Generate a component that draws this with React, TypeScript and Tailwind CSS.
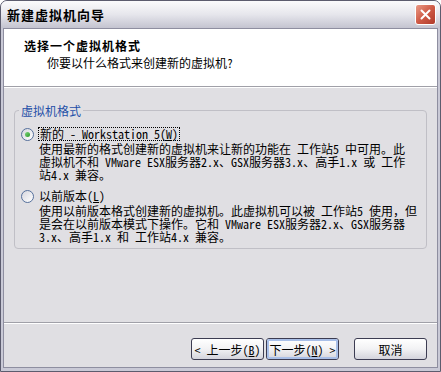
// latin runs in SimSun are half-width (6px at 12px), so render them in a mono CJK face
const mono = "whitespace-pre font-['Noto_Sans_Mono_CJK_SC','Liberation_Mono',monospace] leading-[0px]";

function T({ s }: { s: string }) {
  const parts = s.match(/[\x20-\x7e]+|[^\x20-\x7e]+/g) ?? [];
  return (
    <>
      {parts.map((p, i) =>
        /^[\x20-\x7e]+$/.test(p) ? (
          <span key={i} className={mono}>
            {p}
          </span>
        ) : (
          p
        )
      )}
    </>
  );
}

function Line({ s }: { s: string }) {
  return (
    <div className="h-[13px] whitespace-nowrap leading-[13px]">
      <T s={s} />
    </div>
  );
}

function Radio({ checked }: { checked?: boolean }) {
  return (
    <span className="flex h-[13px] w-[13px] shrink-0 items-center justify-center rounded-full border border-[#55709c] bg-gradient-to-br from-[#d6d6de] to-white">
      {checked && <span className="h-[5px] w-[5px] rounded-full bg-gradient-to-br from-[#7fd47f] to-[#1f9a1f]" />}
    </span>
  );
}

function Button({ children, primary }: { children: React.ReactNode; primary?: boolean }) {
  return (
    <div className="flex h-[22px] w-[73px] items-center justify-center rounded-[3px] border border-[#3c3c52] bg-gradient-to-b from-white via-[#f2f2f4] to-[#d4d4dc] text-[12px] text-black">
      <div
        className={
          primary
            ? "flex h-full w-full items-center justify-center rounded-[2px] border-2 border-[#a9bfe8]"
            : "flex h-full w-full items-center justify-center"
        }
      >
        <div className="h-[13px] whitespace-nowrap leading-[13px]">{children}</div>
      </div>
    </div>
  );
}

export default function App() {
  return (
    <div className="h-[372px] w-[441px] overflow-hidden rounded-t-[7px] border border-[#5c5c6e] bg-[#c9c9d6] font-['Noto_Sans_CJK_SC',sans-serif] text-black">
      {/* title bar */}
      <div className="flex h-[27px] items-center justify-between bg-gradient-to-b from-[#fbfbfc] via-[#e6e6ec] to-[#c4c4d0] pl-[6px] pr-[4px]">
        <span className="text-[13px] font-bold leading-[13px] tracking-[1px]">新建虚拟机向导</span>
        <div className="flex h-[21px] w-[21px] items-center justify-center rounded-[3px] border border-white bg-gradient-to-br from-[#e99a86] via-[#cf5a46] to-[#b03a2a]">
          <svg width="11" height="11" viewBox="0 0 11 11">
            <path d="M1.5 1.5 L9.5 9.5 M9.5 1.5 L1.5 9.5" stroke="white" strokeWidth="2" strokeLinecap="round" />
          </svg>
        </div>
      </div>

      {/* content */}
      <div className="mx-[2px] flex h-[340px] flex-col border border-[#8e8ea0] bg-[#e0dfe3]">
        <div className="h-[58px] border-b border-[#a0a0a8] bg-white pl-[20px] pt-[10px]">
          <div className="text-[12px] font-bold leading-[13px] tracking-[1px]">选择一个虚拟机格式</div>
          <div className="mt-[4px] pl-[23px] text-[12px]">
            <Line s="你要以什么格式来创建新的虚拟机?" />
          </div>
        </div>
        <div className="h-px bg-white" />

        <div className="flex-1 px-[10px] pt-[22px]">
          <div className="relative h-[139px] rounded-[4px] border border-[#c0bfc6] pl-[6px] pt-[16px] text-[12px]">
            <span className="absolute -top-[7px] left-[4px] bg-[#e0dfe3] px-[2px] leading-[14px] text-[#1f4fa8]">
              虚拟机格式
            </span>

            <div className="flex items-center gap-[4px]">
              <Radio checked />
              <div className="h-[14px] whitespace-nowrap border border-dotted border-black px-px leading-[12px]">
                新的
                <span className={mono}>
                  {" - Workstation 5("}
                  <span className="underline">W</span>)
                </span>
              </div>
            </div>
            <div className="mt-px pl-[18px]">
              <Line s="使用最新的格式创建新的虚拟机来让新的功能在 工作站5 中可用。此" />
              <Line s="虚拟机不和 VMware ESX服务器2.x、GSX服务器3.x、高手1.x 或 工作" />
              <Line s="站4.x 兼容。" />
            </div>

            <div className="mt-[8px] flex items-center gap-[4px]">
              <Radio />
              <div className="h-[14px] whitespace-nowrap px-px leading-[13px]">
                以前版本
                <span className={mono}>
                  (<span className="underline">L</span>)
                </span>
              </div>
            </div>
            <div className="mt-px pl-[18px]">
              <Line s="使用以前版本格式创建新的虚拟机。此虚拟机可以被 工作站5 使用，但" />
              <Line s="是会在以前版本模式下操作。它和 VMware ESX服务器2.x、GSX服务器" />
              <Line s="3.x、高手1.x 和 工作站4.x 兼容。" />
            </div>
          </div>
        </div>

        <div className="border-t border-[#a0a0a8]">
          <div className="flex h-[44px] items-start justify-end border-t border-white pr-[10px] pt-[14px]">
            <div className="flex gap-[2px]">
              <Button>
                <span className={mono}>{"< "}</span>
                上一步
                <span className={mono}>
                  (<span className="underline">B</span>)
                </span>
              </Button>
              <Button primary>
                下一步
                <span className={mono}>
                  (<span className="underline">N</span>){" >"}
                </span>
              </Button>
            </div>
            <div className="ml-[15px]">
              <Button>取消</Button>
            </div>
          </div>
        </div>
      </div>
    </div>
  );
}
